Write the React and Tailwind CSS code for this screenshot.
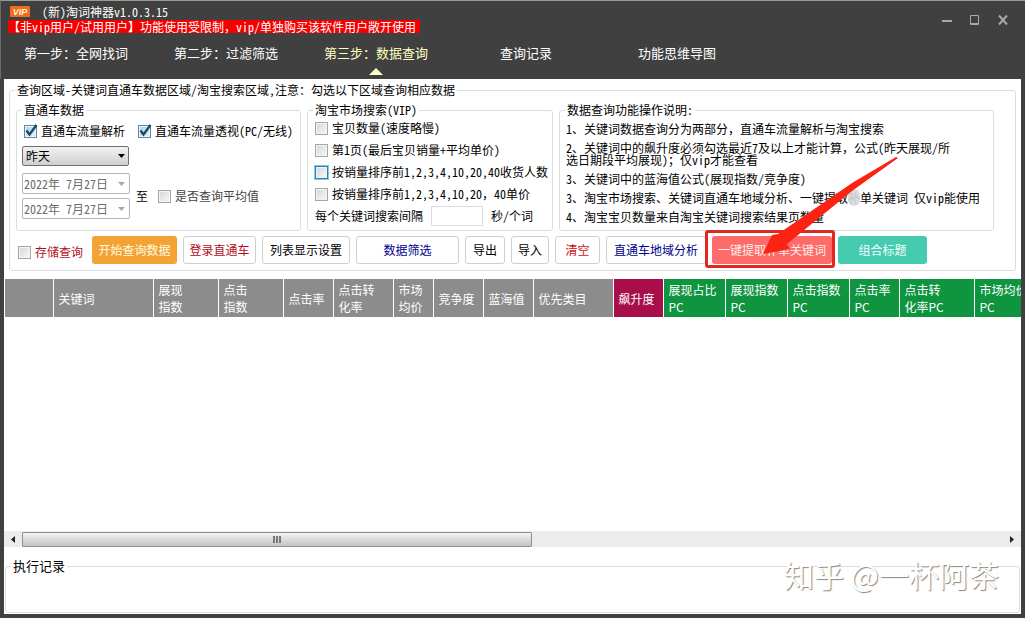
import clsx from 'clsx';

const tabs = [
    { label: '第一步：全网找词', width: 'w-[150px]' },
    { label: '第二步：过滤筛选', width: 'w-[150px]' },
    { label: '第三步：数据查询', width: 'w-44', active: true },
    { label: '查询记录', width: 'w-[138px]' },
    { label: '功能思维导图', width: 'w-auto' },
];

const searchOptions = [
    { id: 'item-count', label: '宝贝数量(速度略慢)' },
    { id: 'first-page', label: '第1页(最后宝贝销量+平均单价)' },
    { id: 'buyers', label: '按销量排序前1,2,3,4,10,20,40收货人数', focused: true },
    { id: 'prices', label: '按销量排序前1,2,3,4,10,20，40单价' },
];

const columns = [
    { title: [''], width: 'w-[48px]' },
    { title: ['关键词'], width: 'w-[100px]' },
    { title: ['展现', '指数'], width: 'w-[65px]' },
    { title: ['点击', '指数'], width: 'w-[65px]' },
    { title: ['点击率'], width: 'w-[50px]' },
    { title: ['点击转', '化率'], width: 'w-[60px]' },
    { title: ['市场', '均价'], width: 'w-[40px]' },
    { title: ['竞争度'], width: 'w-[50px]' },
    { title: ['蓝海值'], width: 'w-[50px]' },
    { title: ['优先类目'], width: 'w-[80px]' },
    { title: ['飙升度'], width: 'w-[50px]', color: 'bg-[#a80e4a]' },
    { title: ['展现占比', 'PC'], width: 'w-[62px]', color: 'bg-[#0f943f]' },
    { title: ['展现指数', 'PC'], width: 'w-[62px]', color: 'bg-[#0f943f]' },
    { title: ['点击指数', 'PC'], width: 'w-[62px]', color: 'bg-[#0f943f]' },
    { title: ['点击率', 'PC'], width: 'w-[50px]', color: 'bg-[#0f943f]' },
    { title: ['点击转', '化率PC'], width: 'w-[75px]', color: 'bg-[#0f943f]' },
    { title: ['市场均价', 'PC'], width: 'w-[62px]', color: 'bg-[#0f943f]' },
];

const Group = ({ title, className, children }) => (
    <fieldset className={clsx('min-w-0 rounded-[3px] border border-[#d9dfdf] px-[5px]', className)}>
        <legend className="px-0.5 leading-[14px]">{title}</legend>
        {children}
    </fieldset>
);

const CheckBox = ({ id, label, checked, focused, className }) => (
    <div className={clsx('flex items-center gap-1', className)}>
        <span className="relative flex size-[13px] shrink-0">
            <input
                id={id}
                type="checkbox"
                defaultChecked={checked}
                className={clsx(
                    'peer size-[13px] appearance-none border bg-linear-to-br from-[#d4d6d8] to-[#f8f8f8] shadow-[inset_0_0_0_1px_#f4f4f4]',
                    focused ? 'border-[#2b7fa8] outline outline-[#7ccdf0]' : 'border-[#a4a5a5]',
                    'checked:border-[#5c8aa8] checked:from-[#a9d3e8] checked:to-[#e4f4fb]'
                )}
            />
            <svg viewBox="0 0 16 16" className="pointer-events-none absolute -top-0.5 left-0 hidden size-4 peer-checked:block">
                <path d="M2.5 7.5 L5.5 11.5 L12.5 2" fill="none" stroke="#1d4a66" strokeWidth="2.4" />
            </svg>
        </span>
        <label htmlFor={id} className="whitespace-nowrap">{label}</label>
    </div>
);

const DateBox = ({ label }) => (
    <div className="flex h-[21px] w-[108px] items-center rounded-[2px] border border-[#b4b4b4] pr-1 pl-px">
        <input
            type="text"
            aria-label={label}
            defaultValue="2022年 7月27日"
            disabled
            className="min-w-0 flex-1 text-[#6d6d6d]"
        />
        <svg viewBox="0 0 7 4" className="h-1 w-[7px] shrink-0"><path d="M0 0h7L3.5 4z" fill="#a8a8a8" /></svg>
    </div>
);

const ActionButton = ({ className, children }) => (
    <button type="button" className={clsx('h-7 shrink-0 rounded-[3px] whitespace-nowrap', className)}>
        {children}
    </button>
);

const TitleBar = () => (
    <header className="border-t border-l border-t-[#9a9c9c] border-l-[#6a6c6c] pt-0.5 text-white">
        <div className="flex items-start justify-between pr-[14px] pl-[7px]">
            <div>
                <div className="flex h-[17px] items-center gap-3 pl-0.5">
                    <svg viewBox="0 0 20 11" className="h-[11px] w-5">
                        <rect width="20" height="11" rx="1" fill="#f26a1b" />
                        <text x="10" y="9" textAnchor="middle" fontSize="9" fontWeight="bold" fontStyle="italic" fontFamily="Liberation Sans, sans-serif" fill="#fff3df">VIP</text>
                    </svg>
                    <h1>(新)淘词神器v1.0.3.15</h1>
                </div>
                <p className="h-[13px] bg-[#f50000] pr-1 leading-[13px]">
                    【非vip用户/试用用户】功能使用受限制，vip/单独购买该软件用户敞开使用
                </p>
            </div>
            <div className="flex gap-3 pt-2 text-[#a8a8a8]">
                <button type="button" aria-label="最小化" className="grid size-4 place-items-center">
                    <svg viewBox="0 0 16 16" className="size-4"><path d="M3 10h10" stroke="currentColor" strokeWidth="2" /></svg>
                </button>
                <button type="button" aria-label="最大化" className="grid size-4 place-items-center">
                    <svg viewBox="0 0 16 16" className="size-4"><path d="M3.5 4.500h8v9h-8z M3 12.500h9" fill="none" stroke="currentColor" /></svg>
                </button>
                <button type="button" aria-label="关闭" className="grid size-4 place-items-center">
                    <svg viewBox="0 0 16 16" className="size-4"><path d="M4 4.500l8 9M12 4.500l-8 9" stroke="currentColor" strokeWidth="2" /></svg>
                </button>
            </div>
        </div>
        <nav className="flex h-[46px] pt-3 pl-[23px] text-[13px] leading-4">
            {tabs.map((tab) => (
                <a key={tab.label} href="#" className={clsx('flex shrink-0 flex-col items-start', tab.width, tab.active && 'text-[#ffffc0]')}>
                    <span className="flex flex-col items-center gap-[7px]">
                        {tab.label}
                        {tab.active && (
                            <svg viewBox="0 0 14 7" className="h-[7px] w-3.5"><path d="M7 0l7 7H0z" fill="#ffffc8" /></svg>
                        )}
                    </span>
                </a>
            ))}
        </nav>
    </header>
);

const QueryPanel = () => (
    <Group title="查询区域-关键词直通车数据区域/淘宝搜索区域,注意：勾选以下区域查询相应数据" className="mx-[5px] pb-1.5">
        <div className="flex gap-1.5 pt-1.5 pr-4 pl-px">
            <Group title="直通车数据" className="w-[285px] shrink-0">
                <div className="flex h-7 items-center gap-[13px] pl-0.5">
                    <CheckBox id="flow-parse" label="直通车流量解析" checked />
                    <CheckBox id="flow-view" label="直通车流量透视(PC/无线)" checked />
                </div>
                <div className="relative mt-px w-[107px]">
                    <select aria-label="日期" className="block h-5 w-full appearance-none rounded-[2px] border border-[#707070] bg-linear-to-b from-[#f2f2f2] to-[#d0d0d0] px-[3px]">
                        <option>昨天</option>
                    </select>
                    <svg viewBox="0 0 7 4" className="pointer-events-none absolute top-2 right-1 h-1 w-[7px]"><path d="M0 0h7L3.5 4z" fill="#000" /></svg>
                </div>
                <div className="mt-[7px] flex items-center gap-1.5">
                    <div className="flex flex-col gap-1">
                        <DateBox label="开始日期" />
                        <DateBox label="结束日期" />
                    </div>
                    <span>至</span>
                    <CheckBox id="average" label="是否查询平均值" className="pl-1 text-[#444]" />
                </div>
            </Group>

            <Group title="淘宝市场搜索(VIP)" className="w-[246px] shrink-0 pb-[3px]">
                {searchOptions.map((option) => (
                    <CheckBox key={option.id} {...option} className="h-[22px] pl-0.5" />
                ))}
                <div className="flex h-[22px] items-center gap-2 pl-0.5">
                    <label htmlFor="interval">每个关键词搜索间隔</label>
                    <input id="interval" type="text" className="h-5 w-[52px] border border-[#dcdfe2]" />
                    <span>秒/个词</span>
                </div>
            </Group>

            <Group title="数据查询功能操作说明:" className="flex-1">
                <ul className="flex flex-col gap-[7px] pt-1.5 pl-px leading-3 whitespace-nowrap">
                    <li>1、关键词数据查询分为两部分，直通车流量解析与淘宝搜索</li>
                    <li>
                        2、关键词中的飙升度必须勾选最近7及以上才能计算，公式(昨天展现/所
                        <br />
                        选日期段平均展现)；仅vip才能查看
                    </li>
                    <li>3、关键词中的蓝海值公式(展现指数/竞争度)</li>
                    <li>
                        3、淘宝市场搜索、关键词直通车地域分析、一键提取
                        <span className="relative">
                            补
                            <span className="absolute inset-0 rounded-full bg-[#d8d8dc]/90" />
                        </span>
                        单关键词 仅vip能使用
                    </li>
                    <li>4、淘宝宝贝数量来自淘宝关键词搜索结果页数量</li>
                </ul>
            </Group>
        </div>

        <div className="mt-[5px] flex items-center gap-1.5 pl-[3px]">
            <CheckBox id="save-query" label="存储查询" className="w-[68px] pt-1 text-[#b50d1c]" />
            <ActionButton className="w-[85px] bg-[#f4a233] text-[#fffbe0]">开始查询数据</ActionButton>
            <ActionButton className="w-[73px] border border-[#cfcfcf] text-[#b50d1c]">登录直通车</ActionButton>
            <ActionButton className="w-[88px] border border-[#cfcfcf]">列表显示设置</ActionButton>
            <ActionButton className="w-[103px] border border-[#cfcfcf] text-[#00008b]">数据筛选</ActionButton>
            <ActionButton className="w-10 border border-[#cfcfcf]">导出</ActionButton>
            <ActionButton className="w-[38px] border border-[#cfcfcf]">导入</ActionButton>
            <ActionButton className="w-[45px] border border-[#cfcfcf] text-[#d01010]">清空</ActionButton>
            <ActionButton className="w-[100px] border border-[#cfcfcf] text-[#00008b]">直通车地域分析</ActionButton>
            <div className="relative">
                <ActionButton className="w-[120px] bg-[#fd6b6b] text-[#fff0e8]">一键提取补单关键词</ActionButton>
                <span className="absolute -top-1.5 -right-[3px] -bottom-1 -left-[7px] rounded-[3px] border-3 border-[#e0281e]" />
                <svg viewBox="0 0 150 110" className="pointer-events-none absolute -top-20 left-10 z-10 h-[110px] w-[150px]">
                    <path d="M144 1L100 27L26 78L20 79L11 98L38 93L35 88L100 35L146 2Z" fill="#fb2314" />
                </svg>
            </div>
            <ActionButton className="w-[89px] bg-[#44cbb0] text-[#f4fffc]">组合标题</ActionButton>
        </div>
    </Group>
);

const KeywordTable = () => (
    <section className="mt-2 flex flex-1 flex-col">
        <div className="min-h-[249px] flex-1 overflow-hidden pl-px">
            <table className="w-[1031px] table-fixed border-collapse font-['Noto_Sans_CJK_SC',sans-serif] leading-[17px] text-white">
                <thead>
                    <tr className="h-[38px]">
                        {columns.map((col, i) => (
                            <th
                                key={i}
                                scope="col"
                                className={clsx('border-r border-white p-0 pl-[5px] text-left align-middle font-normal whitespace-nowrap', col.width, col.color || 'bg-[#8c8c8c]')}
                            >
                                {col.title.map((line) => <div key={line}>{line}</div>)}
                            </th>
                        ))}
                    </tr>
                </thead>
                <tbody />
            </table>
        </div>
        <div className="flex h-4 items-center bg-[#ececec]">
            <button type="button" aria-label="向左滚动" className="grid w-[18px] place-items-center">
                <svg viewBox="0 0 4 7" className="h-[7px] w-1"><path d="M4 0v7L0 3.5z" fill="#222" /></svg>
            </button>
            <div className="flex-1">
                <div className="flex h-[15px] w-[52%] items-center justify-center gap-px rounded-[1px] border border-[#8f8f8f] bg-linear-to-b from-[#f3f3f3] to-[#c4c4c6]">
                    <span className="h-[7px] w-0.5 bg-[#777]" />
                    <span className="h-[7px] w-0.5 bg-[#777]" />
                    <span className="h-[7px] w-0.5 bg-[#777]" />
                </div>
            </div>
            <button type="button" aria-label="向右滚动" className="grid w-[18px] place-items-center">
                <svg viewBox="0 0 4 7" className="h-[7px] w-1"><path d="M0 0v7l4-3.5z" fill="#222" /></svg>
            </button>
        </div>
    </section>
);

const App = () => (
    <div className="flex min-h-screen flex-col overflow-hidden bg-[#404040] font-['Noto_Sans_Mono_CJK_SC','Liberation_Serif','Noto_Sans_CJK_SC',monospace] text-xs text-black">
        <TitleBar />
        <main className="relative mx-1 mb-1 flex flex-1 flex-col bg-white pt-1">
            <QueryPanel />
            <KeywordTable />
            <Group title={<span className="text-[13px]">执行记录</span>} className="mx-px mt-3 mb-px h-[54px]" />
            <div className="absolute right-[22px] bottom-[22px] font-['Noto_Sans_CJK_SC',sans-serif] text-[30px] leading-9 whitespace-nowrap text-white [text-shadow:1px_1px_1px_#888]">
                知乎 @一杯阿茶
            </div>
        </main>
    </div>
);

export default App;
